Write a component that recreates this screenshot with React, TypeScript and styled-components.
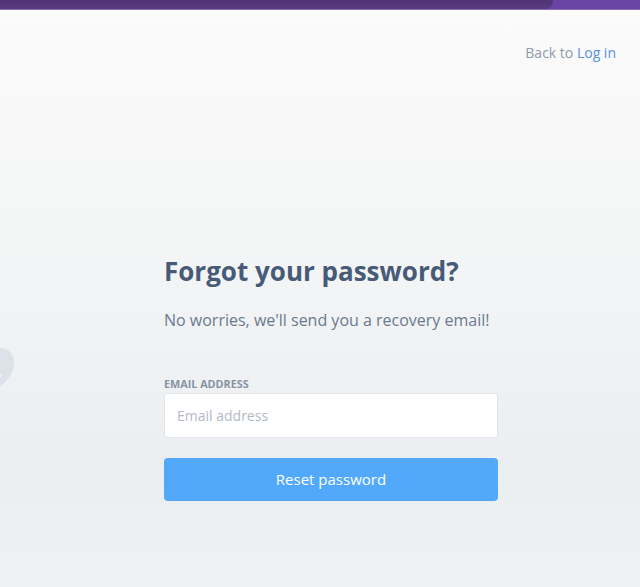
import React from "react";
import styled, { createGlobalStyle } from "styled-components";

const Global = createGlobalStyle`
  html, body { margin: 0; padding: 0; height: 100%; }
  body { font-family: "Open Sans", "Noto Sans", sans-serif; }
  #root { min-height: 100%; }
  * { box-sizing: border-box; }
`;

const Page = styled.div`
  position: relative;
  min-height: 587px;
  overflow: hidden;
  background: linear-gradient(180deg, #fbfbfa 0%, #f6f7f7 30%, #ebeef1 80%, #eef2f5 100%);
  display: flex;
  flex-direction: column;
`;

const TopBar = styled.div`
  height: 10px;
  background: #6a43a6;
  border-bottom: 1px solid #8a6cb8;
  display: flex;
`;

const TopBarInner = styled.div`
  width: 553px;
  height: 100%;
  background: linear-gradient(180deg, #513477 0%, #573a80 100%);
  border-bottom-right-radius: 8px;
`;

const Header = styled.div`
  display: flex;
  justify-content: flex-end;
  padding: 33px 24px 0 0;
`;

const BackLink = styled.div`
  font-size: 14px;
  line-height: 20px;
  color: #8f9aab;
`;

const LinkText = styled.a`
  color: #5a92de;
  text-decoration: none;
`;

const Main = styled.div`
  width: 334px;
  margin: 191px 0 0 164px;
  display: flex;
  flex-direction: column;
`;

const Title = styled.h1`
  margin: 0;
  font-size: 26px;
  line-height: 34px;
  font-weight: 700;
  color: #475b78;
`;

const Subtitle = styled.p`
  margin: 20px 0 0;
  font-size: 16px;
  line-height: 24px;
  color: #6a7a90;
`;

const Label = styled.label`
  margin-top: 45px;
  font-size: 10.8px;
  line-height: 14px;
  font-weight: 700;
  color: #8793a5;
  text-transform: uppercase;
`;

const Input = styled.input`
  margin-top: 2px;
  height: 45px;
  width: 100%;
  border: 1px solid #e1e5e9;
  border-radius: 3px;
  background: #fff;
  padding: 0 12px;
  font-family: "Open Sans", sans-serif;
  font-size: 14px;
  color: #465a78;
  outline: none;
  &::placeholder { color: #b3bac4; }
`;

const Button = styled.button`
  margin-top: 20px;
  height: 43px;
  width: 100%;
  border: none;
  border-radius: 4px;
  background: #52a9fc;
  color: #fff;
  font-family: "Open Sans", sans-serif;
  font-size: 15px;
  padding-bottom: 2px;
  cursor: pointer;
`;

const Quote = styled.svg`
  position: absolute;
  left: -14px;
  top: 346px;
`;

export default function App() {
  return (
    <>
      <Global />
      <Page>
        <TopBar>
          <TopBarInner />
        </TopBar>
        <Header>
          <BackLink>
            Back to <LinkText href="#">Log in</LinkText>
          </BackLink>
        </Header>
        <Main>
          <Title>Forgot your password?</Title>
          <Subtitle>No worries, we'll send you a recovery email!</Subtitle>
          <Label htmlFor="email">Email address</Label>
          <Input id="email" type="email" placeholder="Email address" />
          <Button type="button">Reset password</Button>
        </Main>
        <Quote width="30" height="44" viewBox="0 0 30 44">
          <path
            d="M14 2 C22 2 28 8 28 16 C28 28 20 38 8 43 L6 40 C13 35 16 30 16 28 C8 28 2 22 2 15 C2 8 7 2 14 2 Z"
            fill="#dde2e8"
          />
        </Quote>
      </Page>
    </>
  );
}
